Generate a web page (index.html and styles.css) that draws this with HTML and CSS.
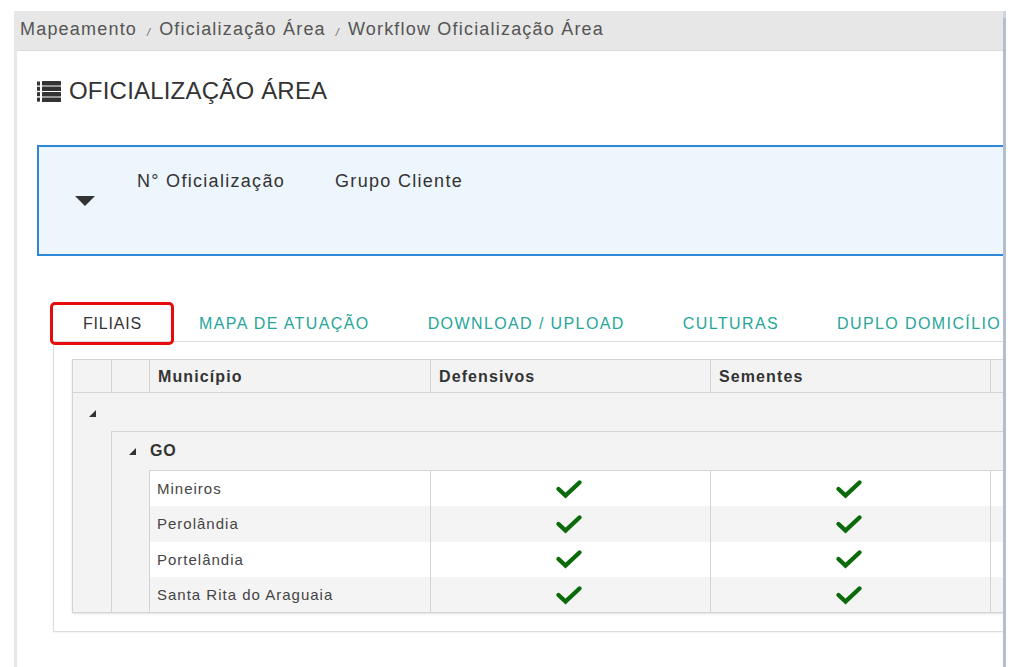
FILE: index.html
```html
<!DOCTYPE html>
<html lang="pt">
<head>
<meta charset="utf-8">
<title>Oficialização Área</title>
<link rel="stylesheet" href="styles.css">
</head>
<body>
<div class="frame">
  <div class="main">
    <div class="crumbs">
      <span>Mapeamento</span><span class="sep">/</span><span>Oficialização Área</span><span class="sep">/</span><span>Workflow Oficialização Área</span>
    </div>
    <div class="panel">
      <div class="title">
        <svg class="list-icon" width="24" height="21" viewBox="0 0 24 21">
          <g fill="#333">
            <rect x="0" y="0.5" width="3" height="4" />
            <rect x="5" y="0" width="19" height="4.5" rx="0.6" />
            <rect x="0" y="5.8" width="3" height="4" />
            <rect x="5" y="5.5" width="19" height="4.5" rx="0.6" />
            <rect x="0" y="11.2" width="3" height="4" />
            <rect x="5" y="11" width="19" height="4.5" rx="0.6" />
            <rect x="0" y="16.6" width="3" height="4" />
            <rect x="5" y="16.5" width="19" height="4.5" rx="0.6" />
          </g>
        </svg>
        <h1>OFICIALIZAÇÃO ÁREA</h1>
      </div>

      <div class="filter-box">
        <span class="caret"></span>
        <span class="flabel first">N° Oficialização</span>
        <span class="flabel">Grupo Cliente</span>
      </div>

      <div class="tabstrip">
        <div class="tabs">
          <span class="tab active">FILIAIS</span>
          <span class="tab">MAPA DE ATUAÇÃO</span>
          <span class="tab">DOWNLOAD / UPLOAD</span>
          <span class="tab">CULTURAS</span>
          <span class="tab">DUPLO DOMICÍLIO</span>
        </div>
        <div class="tabpanel">
          <div class="grid">
            <div class="ghead">
              <div class="hc w1"></div>
              <div class="hc w2"></div>
              <div class="hc wm">Município</div>
              <div class="hc wd">Defensivos</div>
              <div class="hc wd">Sementes</div>
              <div class="hc wx"></div>
            </div>
            <div class="gbody">
              <div class="grow1"><span class="tri"></span></div>
              <div class="group2">
                <div class="grow2"><span class="tri"></span><span class="gname">GO</span></div>
                <div class="rows">
                  <div class="row">
                    <div class="c wm">Mineiros</div>
                    <div class="c wd ck"><svg width="28" height="20" viewBox="0 0 28 20"><polyline points="3.5,10 10.5,16.5 24.5,3.5" fill="none" stroke="#0b6b0b" stroke-width="4.4" stroke-linecap="round" stroke-linejoin="miter"/></svg></div>
                    <div class="c wd ck"><svg width="28" height="20" viewBox="0 0 28 20"><polyline points="3.5,10 10.5,16.5 24.5,3.5" fill="none" stroke="#0b6b0b" stroke-width="4.4" stroke-linecap="round" stroke-linejoin="miter"/></svg></div>
                    <div class="c wx"></div>
                  </div>
                  <div class="row alt">
                    <div class="c wm">Perolândia</div>
                    <div class="c wd ck"><svg width="28" height="20" viewBox="0 0 28 20"><polyline points="3.5,10 10.5,16.5 24.5,3.5" fill="none" stroke="#0b6b0b" stroke-width="4.4" stroke-linecap="round" stroke-linejoin="miter"/></svg></div>
                    <div class="c wd ck"><svg width="28" height="20" viewBox="0 0 28 20"><polyline points="3.5,10 10.5,16.5 24.5,3.5" fill="none" stroke="#0b6b0b" stroke-width="4.4" stroke-linecap="round" stroke-linejoin="miter"/></svg></div>
                    <div class="c wx"></div>
                  </div>
                  <div class="row">
                    <div class="c wm">Portelândia</div>
                    <div class="c wd ck"><svg width="28" height="20" viewBox="0 0 28 20"><polyline points="3.5,10 10.5,16.5 24.5,3.5" fill="none" stroke="#0b6b0b" stroke-width="4.4" stroke-linecap="round" stroke-linejoin="miter"/></svg></div>
                    <div class="c wd ck"><svg width="28" height="20" viewBox="0 0 28 20"><polyline points="3.5,10 10.5,16.5 24.5,3.5" fill="none" stroke="#0b6b0b" stroke-width="4.4" stroke-linecap="round" stroke-linejoin="miter"/></svg></div>
                    <div class="c wx"></div>
                  </div>
                  <div class="row alt">
                    <div class="c wm">Santa Rita do Araguaia</div>
                    <div class="c wd ck"><svg width="28" height="20" viewBox="0 0 28 20"><polyline points="3.5,10 10.5,16.5 24.5,3.5" fill="none" stroke="#0b6b0b" stroke-width="4.4" stroke-linecap="round" stroke-linejoin="miter"/></svg></div>
                    <div class="c wd ck"><svg width="28" height="20" viewBox="0 0 28 20"><polyline points="3.5,10 10.5,16.5 24.5,3.5" fill="none" stroke="#0b6b0b" stroke-width="4.4" stroke-linecap="round" stroke-linejoin="miter"/></svg></div>
                    <div class="c wx"></div>
                  </div>
                </div>
              </div>
            </div>
          </div>
        </div>
      </div>
    </div>
  </div>
  <div class="scroll"><div class="scroll-top"></div></div>
</div>
</body>
</html>
```
FILE: styles.css
```css
* { box-sizing: border-box; }
html, body { margin: 0; padding: 0; background: #fff; overflow: hidden; }
body {
  font-family: "Liberation Sans", Arial, sans-serif;
  color: #333;
}
.frame {
  display: flex;
  margin: 11px 0 0 14px;
  height: 656px;
}
.main {
  width: 989px;
  background: #e6e7e6;
  overflow: hidden;
  display: flex;
  flex-direction: column;
}
.scroll {
  width: 3px;
  background: #b3bed0;
}
.scroll-top {
  height: 7px;
  background: #cdd5e1;
}
.crumbs {
  height: 39px;
  flex: none;
  display: flex;
  align-items: center;
  padding: 0 0 2px 6px;
  font-size: 18px;
  letter-spacing: 1.2px;
  color: #555;
  white-space: nowrap;
}
.crumbs .sep {
  font-size: 11px;
  font-style: italic;
  color: #666;
  margin: 4px 9px 0 10px;
  letter-spacing: 0;
}
.panel {
  flex: 1;
  margin-left: 3px;
  background: #fff;
  border-top: 1px solid #dadada;
  padding: 20px 0 0 20px;
}
.title {
  display: flex;
  align-items: center;
  gap: 8px;
  height: 40px;
}
.list-icon { flex: none; }
.title h1 {
  margin: 0;
  font-size: 24px;
  font-weight: normal;
  letter-spacing: 0.2px;
  color: #333;
}
.filter-box {
  margin-top: 34px;
  width: 1000px;
  height: 111px;
  border: 2px solid #2d88d8;
  background: #edf5fd;
  display: flex;
  align-items: flex-start;
}
.caret {
  width: 0;
  height: 0;
  margin: 49px 0 0 36px;
  border-left: 10px solid transparent;
  border-right: 10px solid transparent;
  border-top: 10px solid #333;
}
.flabel {
  font-size: 18px;
  letter-spacing: 1.3px;
  color: #333;
  margin-top: 24px;
  margin-left: 50px;
}
.flabel.first { margin-left: 42px; }

.tabstrip {
  margin: 50px 0 0 16px;
  width: 1000px;
}
.tabs {
  display: flex;
  border-bottom: 1px solid #dcdcdc;
  padding-left: 1px;
}
.tab {
  height: 35px;
  line-height: 35px;
  padding: 0 29px;
  font-size: 16px;
  letter-spacing: 1.4px;
  color: #26a69a;
  white-space: nowrap;
}
.tab.active {
  color: #333;
  letter-spacing: 0.8px;
  padding: 0 28px 0 29px;
  outline: 3px solid #e8090c;
  outline-offset: 1px;
  border-radius: 1px;
}
.tabpanel {
  border: 1px solid #dcdcdc;
  border-top: 0;
  padding: 17px 0 18px 18px;
  box-shadow: 0 1px 2px rgba(0,0,0,0.06);
}
.grid {
  border: 1px solid #d4d4d4;
  border-right: 0;
  width: 1100px;
  box-shadow: 0 1px 2px rgba(0,0,0,0.12);
}
.ghead {
  display: flex;
  height: 33px;
  background: #f3f3f3;
  border-bottom: 1px solid #d4d4d4;
}
.hc {
  border-right: 1px solid #d4d4d4;
  padding-left: 8px;
  font-size: 16px;
  font-weight: bold;
  letter-spacing: 1.1px;
  color: #333;
  line-height: 33px;
  flex: none;
}
.w1 { width: 39px; }
.w2 { width: 38px; }
.wm { width: 281px; }
.wd { width: 280px; }
.wx { width: 300px; }
.gbody {
  background: #f3f3f3;
}
.grow1 {
  height: 38px;
}
.tri {
  display: inline-block;
  width: 0;
  height: 0;
  border-left: 7px solid transparent;
  border-bottom: 7px solid #333;
}
.grow1 .tri { margin: 17px 0 0 16px; }
.group2 {
  margin-left: 38px;
  border-left: 1px solid #d4d4d4;
  border-top: 1px solid #d4d4d4;
}
.grow2 {
  height: 38px;
  display: flex;
  align-items: center;
}
.grow2 .tri { margin: 0 0 0 17px; }
.gname {
  margin-left: 14px;
  font-size: 16px;
  font-weight: bold;
  letter-spacing: 0.8px;
  color: #333;
}
.rows {
  margin-left: 37px;
  border-left: 1px solid #d4d4d4;
  border-top: 1px solid #d4d4d4;
}
.row {
  display: flex;
  height: 35.3px;
  background: #fff;
}
.row.alt { background: #f4f4f4; }
.c {
  flex: none;
  border-right: 1px solid #d4d4d4;
  font-size: 15px;
  letter-spacing: 1px;
  color: #444;
  display: flex;
  align-items: center;
  padding-left: 7px;
}
.c.ck {
  justify-content: center;
  padding-left: 0;
  padding-right: 4px;
}
```
